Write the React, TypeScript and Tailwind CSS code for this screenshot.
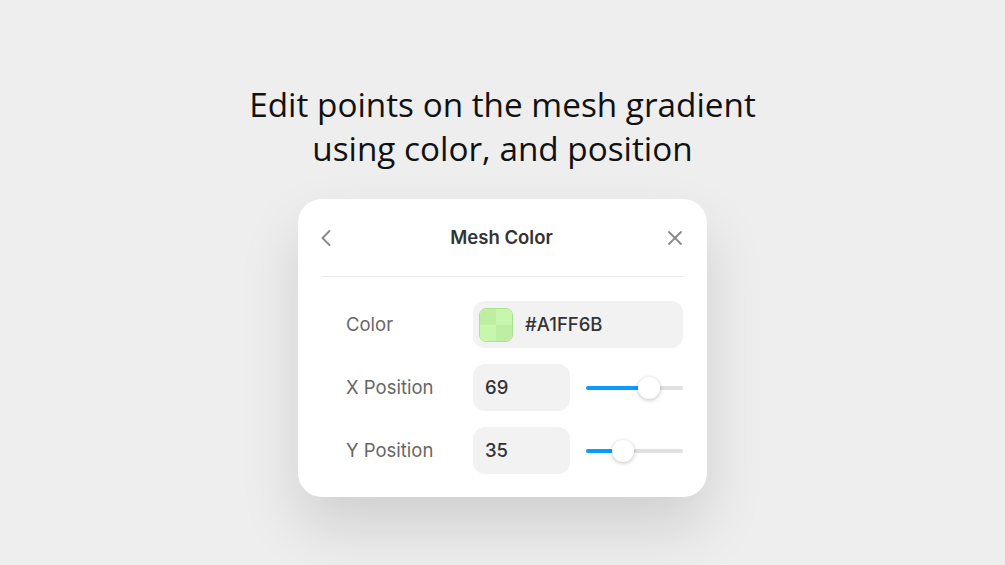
import { ChevronLeft, X } from "lucide-react";

function Slider({ value }: { value: number }) {
  const pos = `calc(11px + ${value / 100} * (100% - 22px))`;
  return (
    <div className="relative h-[22px] w-[97px]">
      <div className="absolute left-0 right-0 top-1/2 h-[4px] -translate-y-1/2 rounded-full bg-[#e0e0e0]" />
      <div
        className="absolute left-0 top-1/2 h-[4px] -translate-y-1/2 rounded-full bg-[#0a9bff]"
        style={{ width: pos }}
      />
      <div
        className="absolute top-0 h-[22px] w-[22px] -translate-x-1/2 rounded-full bg-white shadow-[0_1px_4px_rgba(0,0,0,0.25)]"
        style={{ left: pos }}
      />
    </div>
  );
}

function Row({ label, children }: { label: string; children: React.ReactNode }) {
  return (
    <div className="flex h-[47px] items-center">
      <div className="w-[151px] pl-6 text-[18.5px] text-[#666666]">{label}</div>
      {children}
    </div>
  );
}

export default function App() {
  return (
    <main
      className="flex h-[565px] w-full flex-col items-center bg-[#eeeeee]"
      style={{ fontFamily: "Inter, 'Noto Sans', sans-serif" }}
    >
      <h1
        className="pt-[82px] text-center text-[33.3px] leading-[44px] text-[#111111]"
        style={{ fontFamily: "'Open Sans', Lato, sans-serif" }}
      >
        Edit points on the mesh gradient
        <br />
        using color, and position
      </h1>

      <div className="mt-[29px] w-[409px] rounded-[24px] bg-white px-6 pb-[23px] shadow-[0_30px_60px_rgba(0,0,0,0.13)]">
        {/* header */}
        <div className="flex h-[78px] items-center justify-between border-b border-[#e8e8e8]">
          <ChevronLeft className="-ml-[10px] h-[28px] w-[28px] text-[#888888]" strokeWidth={1.6} />
          <div className="text-[18.5px] font-semibold text-[#333333]">Mesh Color</div>
          <X className="-mr-[4px] h-6 w-6 text-[#888888]" strokeWidth={1.8} />
        </div>

        <div className="flex flex-col gap-4 pt-6">
          <Row label="Color">
            <div className="flex h-[47px] w-[210px] items-center gap-3 rounded-xl bg-[#f2f2f2] px-[6px]">
              <div className="grid h-[34px] w-[34px] grid-cols-2 grid-rows-2 overflow-hidden rounded-[7px] border border-[#a9e38c]">
                <div className="bg-[#bdeea2]" />
                <div className="bg-[#c7f6ad]" />
                <div className="bg-[#c7f6ad]" />
                <div className="bg-[#bdeea2]" />
              </div>
              <span className="text-[18.5px] font-medium text-[#333333]">#A1FF6B</span>
            </div>
          </Row>
          <Row label="X Position">
            <div className="flex h-[47px] w-[97px] items-center rounded-xl bg-[#f2f2f2] px-3 text-[18.5px] font-medium text-[#333333]">
              69
            </div>
            <div className="ml-4">
              <Slider value={69} />
            </div>
          </Row>
          <Row label="Y Position">
            <div className="flex h-[47px] w-[97px] items-center rounded-xl bg-[#f2f2f2] px-3 text-[18.5px] font-medium text-[#333333]">
              35
            </div>
            <div className="ml-4">
              <Slider value={35} />
            </div>
          </Row>
        </div>
      </div>
    </main>
  );
}
